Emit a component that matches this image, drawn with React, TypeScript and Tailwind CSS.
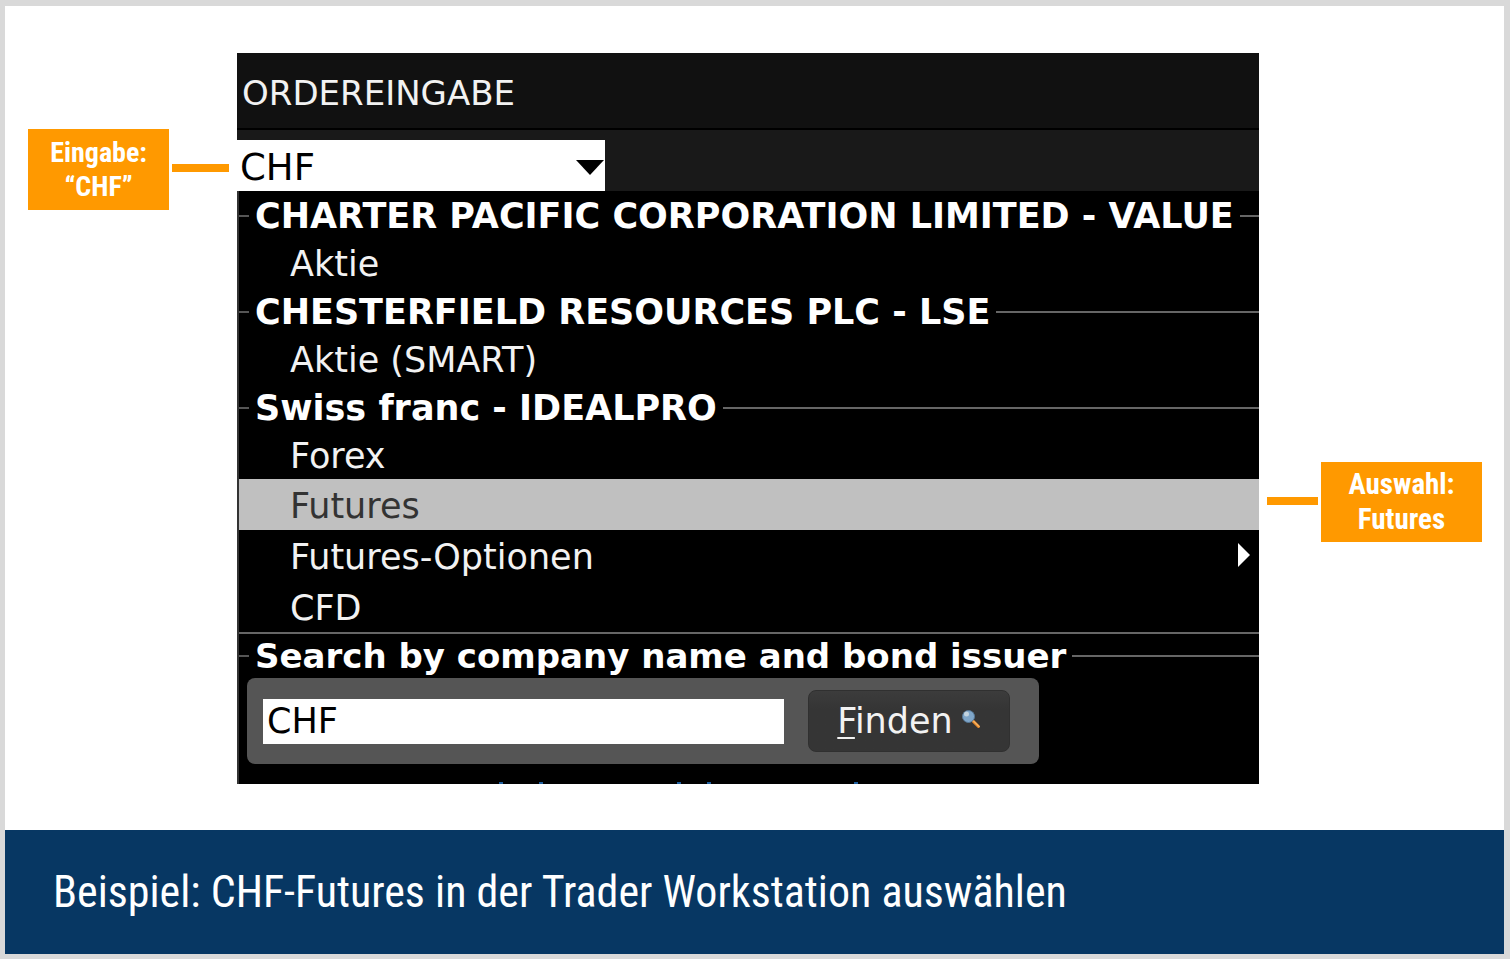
import { useState } from "react";
import clsx from "clsx";

type Group = {
  title: string;
  items: string[];
};

const groups: Group[] = [
  { title: "CHARTER PACIFIC CORPORATION LIMITED - VALUE", items: ["Aktie"] },
  { title: "CHESTERFIELD RESOURCES PLC - LSE", items: ["Aktie (SMART)"] },
  { title: "Swiss franc - IDEALPRO", items: ["Forex"] },
];

const derivatives = ["Futures", "Futures-Optionen", "CFD"];

const GroupTitle = ({ children }: { children: string }) => (
  <div className="flex h-full items-center gap-[6px]">
    <span className="h-[2px] w-[10px] shrink-0 bg-[#555555]" />
    <h2 className="font-bold whitespace-nowrap">{children}</h2>
    <span className="h-[2px] flex-1 bg-[#666666]" />
  </div>
);

const Callout = ({ title, value }: { title: string; value: string }) => (
  <p className="flex h-20 flex-col justify-center font-bold">
    <span>{title}</span>
    <span>{value}</span>
  </p>
);

const SearchIcon = () => (
  <svg viewBox="0 0 20 20" className="mb-1 h-5 w-5" aria-hidden="true">
    <path d="M12 12L17.500 17.500" stroke="#e88a2c" strokeWidth="3" strokeLinecap="round" />
    <path d="M12.500 12L18 17.500" stroke="#ffd08a" strokeWidth="1" strokeLinecap="round" />
    <circle cx="7.500" cy="7.500" r="6" fill="#7fa6c9" stroke="#587a99" strokeWidth="1" />
    <circle cx="5.500" cy="5" r="2.500" fill="#c3d3df" />
  </svg>
);

const App = () => {
  const [selected, setSelected] = useState("Futures");
  const [query, setQuery] = useState("CHF");

  return (
    <div className="flex min-h-screen flex-col border-[5px] border-t-[6px] border-r-[6px] border-[#d9d9d9] bg-white">
      <main className="grid flex-1 grid-cols-[232fr_1022fr_245fr] pt-[47px] pb-[46px]">
        <div className="flex items-start pt-[76px] pr-2 pl-[23px]">
          <div className="grow-[142] basis-0 bg-[#ff9900] pt-px text-center font-['Roboto_Condensed','Liberation_Sans_Narrow',sans-serif] text-[28px] leading-[34px] text-white">
            <Callout title="Eingabe:" value="“CHF”" />
          </div>
          <span className="mt-[35px] ml-[3px] h-2 grow-[57] basis-0 bg-[#ff9900]" />
        </div>

        {/* Order entry window */}
        <section className="flex flex-col bg-black font-['DejaVu_Sans',sans-serif] text-[35px] text-[#f2f2f2]">
          <h1 className="h-[77px] border-b-2 border-black bg-[#111111] pl-[5px] text-[34px] leading-[80px]">
            ORDEREINGABE
          </h1>
          <div className="bg-[#191919] pt-[10px]">
            <div className="relative w-[36%]">
              <select
                aria-label="Symbol"
                className="block h-[51px] w-full appearance-none bg-white pt-1 pl-[3px] text-[37px] leading-[47px] text-black"
              >
                <option>CHF</option>
              </select>
              <svg
                viewBox="0 0 28 15"
                className="pointer-events-none absolute top-5 right-px h-[15px] w-7"
                aria-hidden="true"
              >
                <path d="M0 0H28L14 15Z" fill="#000" />
              </svg>
            </div>
          </div>

          <div className="flex flex-1 flex-col border-l-2 border-[#333333]">
            {groups.map((group) => (
              <div key={group.title}>
                <div className="h-12 pt-[2px] leading-[46px] text-white">
                  <GroupTitle>{group.title}</GroupTitle>
                </div>
                {group.items.map((item) => (
                  <button
                    key={item}
                    className="block h-12 w-full pl-[51px] text-left leading-[50px]"
                    onClick={() => setSelected(item)}
                  >
                    {item}
                  </button>
                ))}
              </div>
            ))}
            {derivatives.map((item) => (
              <button
                key={item}
                className={clsx(
                  "flex h-[51px] w-full items-center justify-between pr-[9px] pl-[51px] text-left leading-[54px]",
                  selected === item && "bg-[#c0c0c0] text-[#333333]"
                )}
                onClick={() => setSelected(item)}
              >
                <span className="pt-[2px]">{item}</span>
                {item === "Futures-Optionen" && (
                  <svg viewBox="0 0 12 24" className="mb-[2px] h-6 w-3" aria-hidden="true">
                    <path d="M0 0L12 12L0 24Z" fill="#fff" />
                  </svg>
                )}
              </button>
            ))}

            <div className="h-[46px] border-t-2 border-[#666666] text-[34px] leading-[44px] text-white">
              <GroupTitle>Search by company name and bond issuer</GroupTitle>
            </div>
            <form
              className="ml-2 flex h-[86px] max-w-[792px] items-center gap-6 rounded-lg bg-[#555555] pr-[29px] pl-4"
              onSubmit={(e) => e.preventDefault()}
            >
              <input
                aria-label="Search by company name and bond issuer"
                className="h-[45px] min-w-0 flex-1 bg-white pl-1 text-black outline-none"
                value={query}
                onChange={(e) => setQuery(e.target.value)}
              />
              <button className="flex h-[62px] w-[202px] items-center justify-center gap-2 rounded-lg border border-[#303030] bg-linear-to-b from-[#3c3c3c] to-[#353535] to-30%">
                <span>
                  <span className="underline decoration-2 underline-offset-4">F</span>inden
                </span>
                <SearchIcon />
              </button>
            </form>
            {/* Upper edge of the next, cut off line */}
            <svg viewBox="0 0 1020 20" className="h-5 w-full" aria-hidden="true">
              <path
                d="M260 19H264M300 19H304M438 19H442M468 19H472M615 19H619"
                stroke="#1f5f9f"
                strokeWidth="2"
              />
            </svg>
          </div>
        </section>

        <div className="flex items-start pt-[409px] pr-[22px] pl-2">
          <span className="mt-[35px] mr-[3px] h-2 grow-[51] basis-0 bg-[#ff9900]" />
          <div className="grow-[161] basis-0 bg-[#ff9900] text-center font-['Roboto_Condensed','Liberation_Sans_Narrow',sans-serif] text-[29px] leading-[35px] text-white">
            <Callout title="Auswahl:" value="Futures" />
          </div>
        </div>
      </main>

      <footer className="bg-[#073763] px-12 py-8 font-['Roboto_Condensed','Liberation_Sans_Narrow','Liberation_Sans',sans-serif] text-[44px] leading-[60px] text-white">
        Beispiel: CHF-Futures in der Trader Workstation auswählen
      </footer>
    </div>
  );
};

export default App;
